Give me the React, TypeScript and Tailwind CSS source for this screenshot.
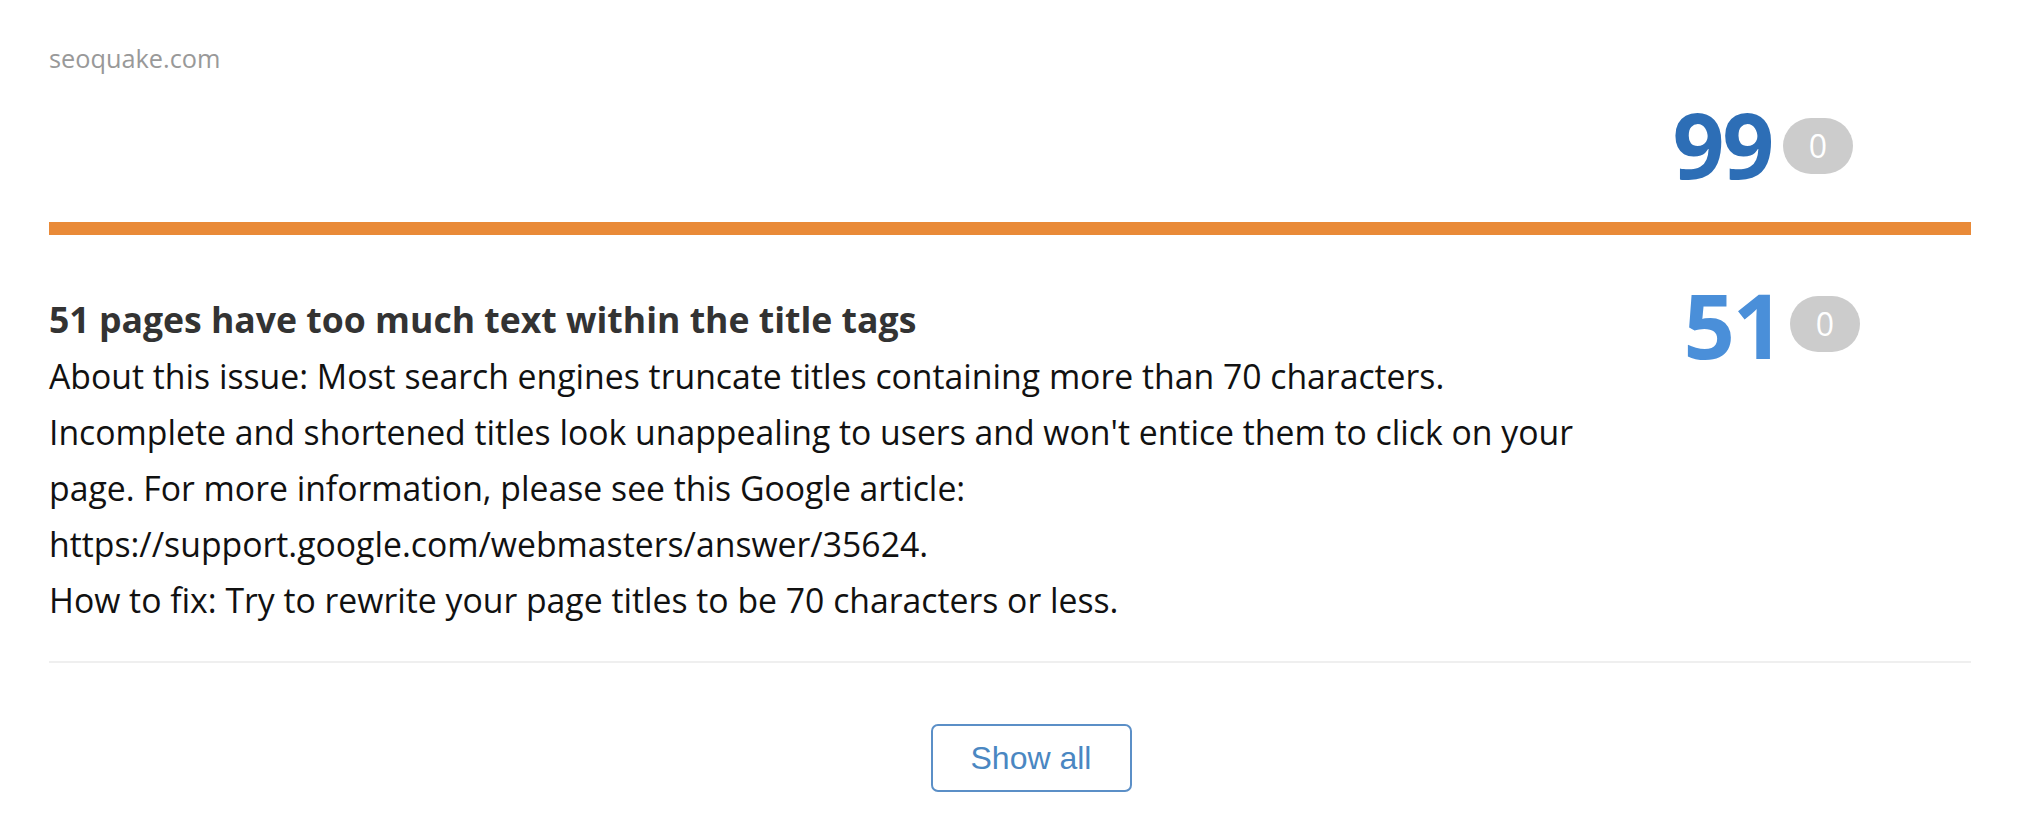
const issueLines = [
  "About this issue: Most search engines truncate titles containing more than 70 characters.",
  "Incomplete and shortened titles look unappealing to users and won't entice them to click on your",
  "page. For more information, please see this Google article:",
  "https://support.google.com/webmasters/answer/35624.",
  "How to fix: Try to rewrite your page titles to be 70 characters or less.",
];

function Badge({ value }: { value: number }) {
  return (
    <span className="flex h-[56px] w-[70px] items-center justify-center rounded-full bg-[#cccccc] text-[32px] leading-none font-medium text-white">
      {value}
    </span>
  );
}

export default function App() {
  return (
    <div className="h-[830px] w-[2020px] overflow-hidden bg-white px-[49px] font-['Open_Sans',sans-serif]">
      {/* Site name */}
      <div className="pt-[42px] text-[25.3px] leading-[32px] text-[#999999]">
        seoquake.com
      </div>

      {/* Total score */}
      <div className="mt-[25px] flex items-center justify-end gap-[11px] pr-[118px]">
        <span className="text-[91px] leading-none font-bold tracking-tight text-[#2d6eb6]">
          99
        </span>
        <span className="mt-[3px]">
          <Badge value={0} />
        </span>
      </div>

      <div className="mt-[32px] h-[13px] bg-[#e98a38]" />

      {/* Issue row */}
      <div className="flex items-start">
        <div className="min-w-0 flex-1 pt-[65px]">
          <h3 className="text-[35.6px] leading-[38px] font-bold text-[#333333]">
            51 pages have too much text within the title tags
          </h3>
          <p className="mt-[10px] text-[33.75px] leading-[56px] text-[#111111]">
            {issueLines.map((line) => (
              <span key={line} className="block whitespace-nowrap">
                {line}
              </span>
            ))}
          </p>
        </div>
        <div className="flex items-center gap-[8px] pt-[44px] pr-[111px]">
          <span className="text-[90px] leading-none font-bold tracking-tight text-[#4a8fd9]">
            51
          </span>
          <Badge value={0} />
        </div>
      </div>

      <div className="mt-[33px] h-[2px] bg-[#efefef]" />

      {/* Show all */}
      <div className="flex justify-center pt-[61px] pl-[42px]">
        <button className="h-[68px] w-[201px] rounded-[7px] border-2 border-[#5b8fc7] font-['Liberation_Sans',Arial,sans-serif] text-[32px] text-[#4a87c2]">
          Show all
        </button>
      </div>
    </div>
  );
}
